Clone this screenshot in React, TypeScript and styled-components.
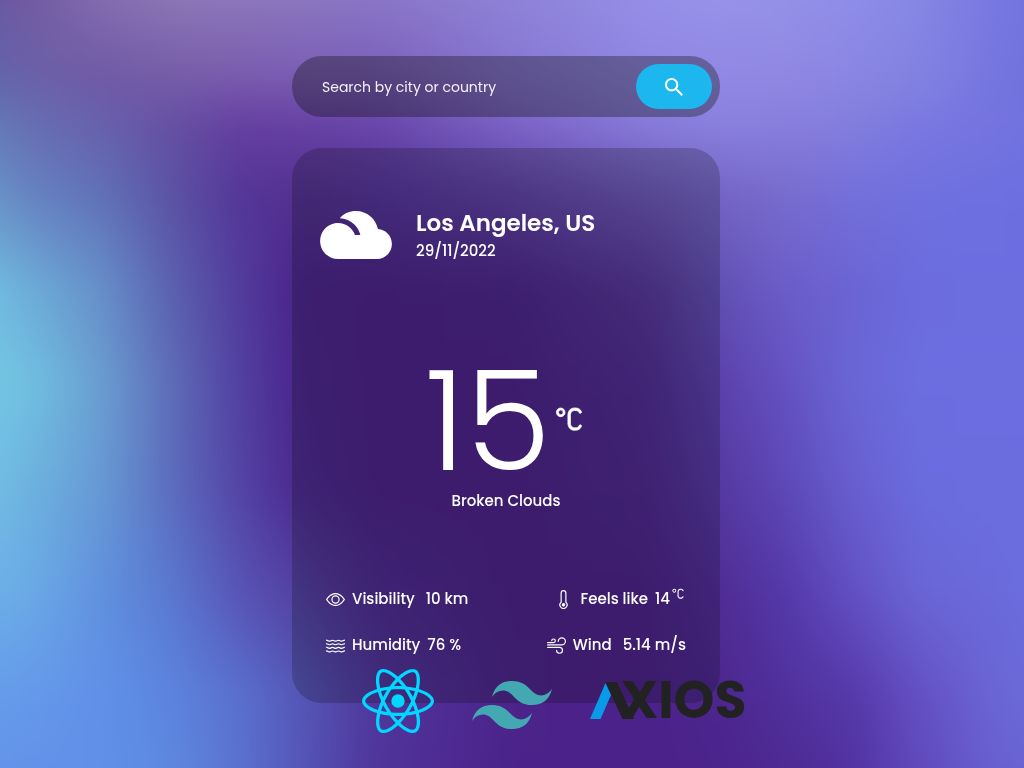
import React from "react";
import styled, { createGlobalStyle } from "styled-components";
import { BsEye, BsThermometer, BsWater, BsWind } from "react-icons/bs";
import { IoMdCloudy, IoMdSearch } from "react-icons/io";
import { SiReact, SiTailwindcss } from "react-icons/si";
import { WiCelsius } from "react-icons/wi";

const GlobalStyle = createGlobalStyle`
  *, *::before, *::after { box-sizing: border-box; }
  body {
    margin: 0;
    background: #4b2289;
    color: #fff;
    font-family: Poppins, Inter, "Liberation Sans", sans-serif;
    font-size: 15px;
    font-weight: 500;
    line-height: 24px;
  }
  h1, p, dl, dd { margin: 0; }
`;

/* Each band is one horizontal colour ramp; a mask fades it in over the band above. */
type Band = { at: number; stops: string };

const BANDS: Band[] = [
  { at: 0, stops: "#644ea0, #775a9f 6.25%, #8c74b2 12.5%, #9480ba 18.75%, #9480c0 25%, #8f7fca 37.5%, #9186da 50%, #9892ea 62.5%, #9a96ec 68.75%, #9694ea 75%, #9090ea 81.25%, #8888e6 87.5%, #7a7ae2 93.75%, #7072de" },
  { at: 13, stops: "#5f66ae, #6a60a8 6.25%, #7059a6 12.5%, #765ca8 18.75%, #7a5cae 25%, #7a5eba 37.5%, #8676d2 50%, #8f86e2 62.5%, #9088e4 68.75%, #9088e2 75%, #8a86e2 81.25%, #8282e2 87.5%, #7676de 93.75%, #7070de" },
  { at: 19, stops: "#6480bc, #666eb2 6.25%, #6860ac 12.5%, #6450a2 18.75%, #643ea0 25%, #6844a8 37.5%, #7a62c4 50%, #877ad8 62.5%, #8a80de 68.75%, #887edc 75%, #827ede 81.25%, #7a78e0 87.5%, #7070e0" },
  { at: 27, stops: "#6a9ccc, #6680c0 6.25%, #6070b6 12.5%, #5c52a4 18.75%, #543698 25%, #52308f 31.25%, #54349a 37.5%, #5e42a4 50%, #6c58b8 62.5%, #7464c4 68.75%, #786cce 75%, #7470da 81.25%, #7070e0 87.5%, #6c6ee0" },
  { at: 38.5, stops: "#74c6e4, #6caad8 6.25%, #668ec8 12.5%, #5b60b0 18.75%, #523c9c 25%, #4b258b 30%, #4b2288 37.5%, #4c258b 50%, #563698 62.5%, #6050b2 68.75%, #6c5cc8 75%, #6a64d4 81.25%, #6c6cde 87.5%, #6c6ee0" },
  { at: 50, stops: "#76cce6, #70bee0 6.25%, #6a9cd0 12.5%, #5e6cb8 18.75%, #5240a0 25%, #4b278d 30%, #4b2288 37.5%, #4b2288 50%, #502c92 62.5%, #5a40aa 68.75%, #6452c0 75%, #6a66d6 81.25%, #6c6ee0 87.5%, #6c6ee0" },
  { at: 62.5, stops: "#74c6e8, #6cb0de 6.25%, #6698d4 12.5%, #5c6cbe 18.75%, #5444a4 25%, #4d2a90 30%, #4b2288 37.5%, #4b2288 50%, #4e288e 62.5%, #5638a0 68.75%, #5c48b6 75%, #685ed0 81.25%, #6a6cde 87.5%, #6c6ee0" },
  { at: 75, stops: "#6eb4e8, #6aa8e6 6.25%, #6090de 12.5%, #5a78d0 18.75%, #5854b6 25%, #523e9e 31.25%, #4e2a90 37.5%, #4b2288 50%, #4b2289 62.5%, #502c94 68.75%, #5438a8 75%, #6250c4 81.25%, #6a66d6 87.5%, #6c6ee0" },
  { at: 87.5, stops: "#669eea, #6498ea 6.25%, #6090e8 12.5%, #5c84de 18.75%, #5a70ce 25%, #5454b4 31.25%, #50369c 37.5%, #4c248a 50%, #4b2289 62.5%, #4c268e 68.75%, #50309c 75%, #5638a8 81.25%, #6450c4 87.5%, #6a64d4 93.75%, #6c6edc" },
  { at: 100, stops: "#6292ea, #6290e8 6.25%, #6090e8 12.5%, #5e8ae0 18.75%, #5c72d0 25%, #5452b6 31.25%, #50349a 37.5%, #4b2289 50%, #4b2289 62.5%, #4b238a 68.75%, #4c2890 75%, #50309e 81.25%, #5e48ba 87.5%, #685cce 93.75%, #6864d4" },
];

const Backdrop = styled.div`
  position: fixed;
  inset: -32px;
  z-index: -1;
  display: grid;
  filter: blur(14px);
`;

const ColourBand = styled.div<{ $stops: string; $from: number; $to: number }>`
  grid-area: 1 / 1;
  background: linear-gradient(90deg, ${(p) => p.$stops});
  mask-image: ${(p) =>
    p.$to > 0 ? `linear-gradient(transparent ${p.$from}%, #000 ${p.$to}%)` : "none"};
`;

const Page = styled.main`
  min-height: 100vh;
  padding: 56px 12px 0 0;
  display: flex;
  justify-content: center;
`;

const Column = styled.div`
  position: relative;
  width: 100%;
  max-width: 428px;
  align-self: flex-start;
  display: flex;
  flex-direction: column;
  gap: 31px;
`;

const SearchBar = styled.form`
  display: flex;
  align-items: center;
  padding: 8px 8px 8px 30px;
  border-radius: 30px;
  background: rgba(10, 8, 4, 0.32);
`;

const SearchInput = styled.input`
  flex: 1;
  min-width: 0;
  padding: 0;
  border: 0;
  outline: 0;
  background: none;
  color: #fff;
  font: inherit;
  font-size: 14px;
  font-weight: 400;
  &::placeholder { color: #f3f1f8; opacity: 1; }
`;

const SearchButton = styled.button`
  display: flex;
  align-items: center;
  justify-content: center;
  width: 76px;
  height: 45px;
  padding: 0;
  border: 0;
  border-radius: 24px;
  background: #1cb7ee;
  color: #fff;
  cursor: pointer;
`;

const Card = styled.section`
  display: flex;
  flex-direction: column;
  padding: 46px 34px 46px 28px;
  border-radius: 30px;
  background: rgba(10, 8, 8, 0.21);
`;

const Place = styled.header`
  display: flex;
  align-items: center;
  gap: 19px;
  margin-left: -5px;
`;

const City = styled.h1`
  font-size: 23px;
  line-height: 32px;
  font-weight: 600;
`;

const DateLine = styled.p`
  line-height: 24px;
`;

const Reading = styled.div`
  display: flex;
  flex-direction: column;
  align-items: center;
  padding: 79px 0 74px 6px;
`;

const Temperature = styled.div`
  display: flex;
  align-items: center;
  margin-left: 18px;
`;

const Degrees = styled.span`
  font-size: 138px;
  line-height: 134px;
  font-weight: 300;
`;

const Unit = styled(WiCelsius)`
  margin-left: -18px;
  stroke: currentColor;
  stroke-width: 0.3;
`;

const SmallUnit = styled(WiCelsius)`
  margin: -8px -8px 0;
`;

const Details = styled.dl`
  display: grid;
  grid-template-columns: auto auto;
  justify-content: space-between;
  row-gap: 22px;
  padding-left: 6px;
`;

const Detail = styled.div<{ $end?: boolean }>`
  display: flex;
  align-items: center;
  justify-content: ${(p) => (p.$end ? "flex-end" : "flex-start")};
  gap: 7px;
`;

const Value = styled.dd<{ $wide?: boolean }>`
  display: flex;
  align-items: flex-start;
  padding-left: ${(p) => (p.$wide ? 4 : 0)}px;
`;

const Logos = styled.footer`
  position: absolute;
  left: 70px;
  bottom: -42px;
  display: flex;
  align-items: flex-start;
  gap: 38px;
`;

const AxiosMark = styled.span`
  display: flex;
  align-items: center;
  color: #222;
  font-size: 52px;
  line-height: 70px;
  font-weight: 700;
`;

const AxiosLetters = styled.span`
  margin-left: -13px;
`;

export default function App() {
  return (
    <>
      <GlobalStyle />
      <Backdrop aria-hidden="true">
        {BANDS.map((band, i) => (
          <ColourBand
            key={band.at}
            $stops={band.stops}
            $from={i ? BANDS[i - 1].at : 0}
            $to={band.at}
          />
        ))}
      </Backdrop>
      <Page>
        <Column>
          <SearchBar role="search" onSubmit={(e) => e.preventDefault()}>
            <SearchInput
              type="text"
              aria-label="Search by city or country"
              placeholder="Search by city or country"
            />
            <SearchButton type="submit" aria-label="Search">
              <IoMdSearch size={24} />
            </SearchButton>
          </SearchBar>

          <Card>
            <Place>
              <IoMdCloudy size={82} />
              <div>
                <City>Los Angeles, US</City>
                <DateLine>29/11/2022</DateLine>
              </div>
            </Place>

            <Reading>
              <Temperature>
                <Degrees>15</Degrees>
                <Unit size={72} />
              </Temperature>
              <p>Broken Clouds</p>
            </Reading>

            <Details>
              <Detail>
                <BsEye size={19} />
                <dt>Visibility</dt>
                <Value $wide>10 km</Value>
              </Detail>
              <Detail $end>
                <BsThermometer size={19} />
                <dt>Feels like</dt>
                <Value>
                  14
                  <SmallUnit size={32} />
                </Value>
              </Detail>
              <Detail>
                <BsWater size={19} />
                <dt>Humidity</dt>
                <Value>76 %</Value>
              </Detail>
              <Detail $end>
                <BsWind size={19} />
                <dt>Wind</dt>
                <Value $wide>5.14 m/s</Value>
              </Detail>
            </Details>
          </Card>

          <Logos>
            <SiReact size={72} color="#00d8ff" />
            <SiTailwindcss size={80} color="#44a8b3" />
            <AxiosMark>
              <svg width="44" height="37" viewBox="0 0 44 37" aria-hidden="true">
                <path d="M0 37 15.500 1 21 13 10.500 37Z" fill="#0a9be8" />
                <path d="M15.500 0H27L44 37H32.500Z" fill="#222" />
              </svg>
              <AxiosLetters>XIOS</AxiosLetters>
            </AxiosMark>
          </Logos>
        </Column>
      </Page>
    </>
  );
}
